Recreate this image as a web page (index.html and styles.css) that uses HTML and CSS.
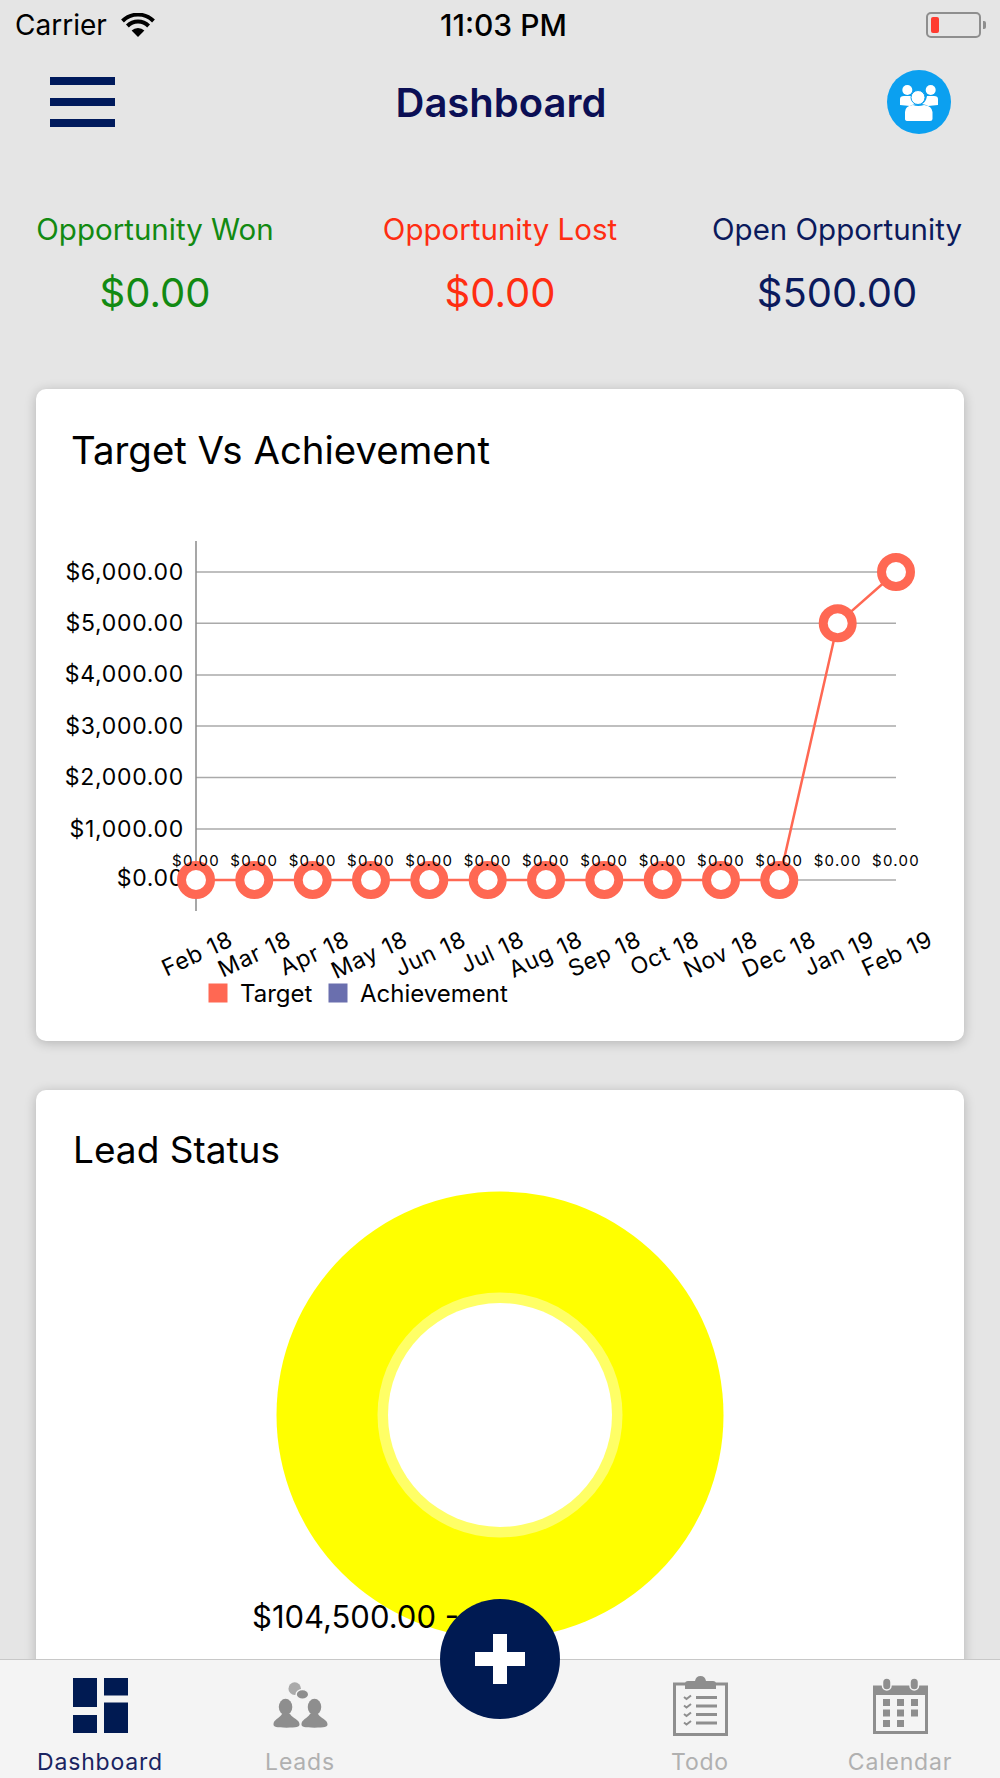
FILE: index.html
```html
<!DOCTYPE html>
<html lang="en">

<head>
    <meta charset="UTF-8">
    <meta name="viewport" content="width=device-width, initial-scale=1.0">
    <title>Dashboard</title>
    <link rel="stylesheet" href="styles.css">
</head>

<body>
    <div class="page">
        <div class="status-bar">
            <div class="status-left">
                <span class="carrier">Carrier</span>
                <svg class="wifi" viewBox="0 0 34 24">
                    <path d="M17 24 L10.6 17.6 A9 9 0 0 1 23.4 17.6 Z" fill="#000" />
                    <path d="M6.4 13 A15 15 0 0 1 27.6 13" fill="none" stroke="#000" stroke-width="4" />
                    <path d="M1.5 8 A22 22 0 0 1 32.5 8" fill="none" stroke="#000" stroke-width="4" />
                </svg>
            </div>
            <span class="clock">11:03 PM</span>
            <div class="battery">
                <div class="battery-body">
                    <div class="battery-level"></div>
                </div>
                <div class="battery-nub"></div>
            </div>
        </div>

        <header class="header">
            <button class="menu-toggle">
                <span></span>
                <span></span>
                <span></span>
            </button>
            <h1 class="header-title">Dashboard</h1>
            <svg class="team-icon" viewBox="-32 -32 64 64">
                <circle r="32" fill="#0ba0f0" />
                <g fill="#fff">
                    <circle cx="-11.7" cy="-12" r="5" />
                    <circle cx="11.7" cy="-12" r="5" />
                    <path d="M-19 3 L-19 -3 Q-19 -6 -15 -6 L-8 -6 Q-7 0 -3 2 Q-8 3 -9 4 Z" />
                    <path d="M19 3 L19 -3 Q19 -6 15 -6 L8 -6 Q7 0 3 2 Q8 3 9 4 Z" />
                    <circle cx="-1" cy="-4.500" r="7" stroke="#0ba0f0" stroke-width="1" />
                    <path d="M-14 17 L-14 10 Q-14 4 -6 3 Q-1 5 5 3 Q13 4 13.500 10 L13.500 17 Q13.500 19 11 19 L-11 19 Q-14 19 -14 17 Z" />
                </g>
            </svg>
        </header>

        <section class="summary">
            <div class="summary-item won">
                <div class="summary-label">Opportunity Won</div>
                <div class="summary-value">$0.00</div>
            </div>
            <div class="summary-item lost">
                <div class="summary-label">Opportunity Lost</div>
                <div class="summary-value">$0.00</div>
            </div>
            <div class="summary-item open">
                <div class="summary-label">Open Opportunity</div>
                <div class="summary-value">$500.00</div>
            </div>
        </section>

        <section class="card card-target">
            <h2 class="card-title">Target Vs Achievement</h2>
            <svg class="line-chart" viewBox="36 500 928 530">
                <!-- grid -->
                <g class="grid">
                    <line x1="196" y1="572" x2="896" y2="572" />
                    <line x1="196" y1="623.300" x2="896" y2="623.300" />
                    <line x1="196" y1="675" x2="896" y2="675" />
                    <line x1="196" y1="726" x2="896" y2="726" />
                    <line x1="196" y1="777.500" x2="896" y2="777.500" />
                    <line x1="196" y1="829" x2="896" y2="829" />
                    <line x1="196" y1="880" x2="896" y2="880" />
                </g>
                <line class="axis" x1="196" y1="541" x2="196" y2="911" />

                <g class="y-labels">
                    <text x="184" y="580">$6,000.00</text>
                    <text x="184" y="631">$5,000.00</text>
                    <text x="184" y="682">$4,000.00</text>
                    <text x="184" y="734">$3,000.00</text>
                    <text x="184" y="785">$2,000.00</text>
                    <text x="184" y="837">$1,000.00</text>
                    <text x="184" y="886">$0.00</text>
                </g>

                <!-- serie -->
                <polyline class="serie" points="196,880 779.300,880 837.700,623.300 896,572" />
                <g class="points">
                    <circle cx="196" cy="880" r="14.500" />
                    <circle cx="254.300" cy="880" r="14.500" />
                    <circle cx="312.700" cy="880" r="14.500" />
                    <circle cx="371" cy="880" r="14.500" />
                    <circle cx="429.300" cy="880" r="14.500" />
                    <circle cx="487.700" cy="880" r="14.500" />
                    <circle cx="546" cy="880" r="14.500" />
                    <circle cx="604.300" cy="880" r="14.500" />
                    <circle cx="662.700" cy="880" r="14.500" />
                    <circle cx="721" cy="880" r="14.500" />
                    <circle cx="779.300" cy="880" r="14.500" />
                    <circle cx="837.700" cy="623.300" r="14.500" />
                    <circle cx="896" cy="572" r="14.500" />
                </g>

                <g class="point-labels">
                    <text x="196" y="865.500">$0.00</text>
                    <text x="254.300" y="865.500">$0.00</text>
                    <text x="312.700" y="865.500">$0.00</text>
                    <text x="371" y="865.500">$0.00</text>
                    <text x="429.300" y="865.500">$0.00</text>
                    <text x="487.700" y="865.500">$0.00</text>
                    <text x="546" y="865.500">$0.00</text>
                    <text x="604.300" y="865.500">$0.00</text>
                    <text x="662.700" y="865.500">$0.00</text>
                    <text x="721" y="865.500">$0.00</text>
                    <text x="779.300" y="865.500">$0.00</text>
                    <text x="837.700" y="865.500">$0.00</text>
                    <text x="896" y="865.500">$0.00</text>
                </g>

                <g class="x-labels">
                    <text transform="translate(234.500 945) rotate(-25)">Feb 18</text>
                    <text transform="translate(292.800 945) rotate(-25)">Mar 18</text>
                    <text transform="translate(351.200 945) rotate(-25)">Apr 18</text>
                    <text transform="translate(409.500 945) rotate(-25)">May 18</text>
                    <text transform="translate(467.800 945) rotate(-25)">Jun 18</text>
                    <text transform="translate(526.200 945) rotate(-25)">Jul 18</text>
                    <text transform="translate(584.500 945) rotate(-25)">Aug 18</text>
                    <text transform="translate(642.800 945) rotate(-25)">Sep 18</text>
                    <text transform="translate(701.200 945) rotate(-25)">Oct 18</text>
                    <text transform="translate(759.500 945) rotate(-25)">Nov 18</text>
                    <text transform="translate(817.800 945) rotate(-25)">Dec 18</text>
                    <text transform="translate(876.200 945) rotate(-25)">Jan 19</text>
                    <text transform="translate(934.500 945) rotate(-25)">Feb 19</text>
                </g>

                <!-- legend -->
                <rect x="208.500" y="983.500" width="19" height="19" fill="#ff6853" />
                <text class="legend-text" x="240" y="1002">Target</text>
                <rect x="328.500" y="983.500" width="19" height="19" fill="#6a6fae" />
                <text class="legend-text" x="360" y="1002">Achievement</text>
            </svg>
        </section>

        <section class="card card-status">
            <h2 class="card-title">Lead Status</h2>
            <svg class="donut-chart" viewBox="36 1180 928 480">
                <circle cx="500" cy="1415" r="223.500" fill="#ffff00" />
                <circle cx="500" cy="1415" r="122.500" fill="#ffff66" />
                <circle cx="500" cy="1415" r="112" fill="#fff" />
                <text class="donut-label" x="252" y="1628">$104,500.00 -</text>
            </svg>
        </section>

        <button class="fab">
            <svg viewBox="0 0 50 50">
                <path d="M18 0 H32 V18 H50 V32 H32 V50 H18 V32 H0 V18 H18 Z" fill="#fff" />
            </svg>
        </button>

        <nav class="tab-bar">
            <a class="tab active" href="#dashboard">
                <svg class="tab-icon" viewBox="0 0 55 56">
                    <rect x="0" y="0" width="24" height="29" />
                    <rect x="0" y="37" width="24" height="18" />
                    <rect x="31" y="0" width="24" height="17.500" />
                    <rect x="31" y="24.500" width="24" height="30.500" />
                </svg>
                <span>Dashboard</span>
            </a>
            <a class="tab" href="#leads">
                <svg class="tab-icon" viewBox="-0.500 -5 57 56">
                    <ellipse cx="22" cy="5" rx="6.500" ry="6.500" fill="#aaa" />
                    <ellipse cx="30" cy="11" rx="6.500" ry="5" stroke="#f4f4f4" stroke-width="1.500" />
                    <ellipse cx="12.500" cy="24" rx="7" ry="8.500" />
                    <ellipse cx="42.500" cy="24" rx="7" ry="8.500" />
                    <path d="M0 42 C0 37 6 36 9 31 L17 31 C20 36 27 37 27 42 C27 45 24 45.500 13.500 45.500 C3 45.500 0 45 0 42 Z" />
                    <path d="M29 42 C29 37 35 36 38 31 L46 31 C49 36 56 37 56 42 C56 45 53 45.500 42.500 45.500 C32 45.500 29 45 29 42 Z" />
                </svg>
                <span>Leads</span>
            </a>
            <div class="tab tab-spacer"></div>
            <a class="tab" href="#todo">
                <svg class="tab-icon tab-icon-tall" viewBox="0 0 55 60">
                    <rect x="1.500" y="8" width="52" height="50.500" fill="none" stroke="#8e8e8e" stroke-width="3" />
                    <path d="M12 13 V8 Q12 5 15 5 H22 Q23 0 27.500 0 Q32 0 33 5 H40 Q43 5 43 8 V13 Z" />
                    <path class="todo-lines" d="M23 21.500 H44 M23 30 H44 M23 38.500 H44 M23 47 H44" />
                    <path class="todo-checks" d="M11 21 L13.500 23 L18 19.500 M11 29.500 L13.500 31.500 L18 28 M11 38 L13.500 40 L18 36.500 M11 46.500 L13.500 48.500 L18 45" />
                </svg>
                <span>Todo</span>
            </a>
            <a class="tab" href="#calendar">
                <svg class="tab-icon" viewBox="0 0 55 56">
                    <rect x="1.500" y="9" width="52" height="45.500" fill="none" stroke="#8e8e8e" stroke-width="3" />
                    <rect x="0" y="8" width="55" height="9" />
                    <rect x="9.500" y="0" width="8.500" height="12" rx="4.250" stroke="#f4f4f4" stroke-width="1.500" />
                    <rect x="37" y="0" width="8.500" height="12" rx="4.250" stroke="#f4f4f4" stroke-width="1.500" />
                    <rect x="10" y="21" width="7" height="7" />
                    <rect x="24" y="21" width="7" height="7" />
                    <rect x="38" y="21" width="7" height="7" />
                    <rect x="10" y="31.500" width="7" height="7" />
                    <rect x="24" y="31.500" width="7" height="7" />
                    <rect x="38" y="31.500" width="7" height="7" />
                    <rect x="10" y="42" width="7" height="7" />
                    <rect x="24" y="42" width="7" height="7" />
                </svg>
                <span>Calendar</span>
            </a>
        </nav>
    </div>
</body>

</html>
```

FILE: styles.css
```css
body {
    font-family: Inter, 'Liberation Sans', sans-serif;
    margin: 0;
    padding: 0;
    background: #e5e5e5;
    color: #000;
}

.page {
    position: relative;
    width: 1000px;
    height: 1778px;
    overflow: hidden;
}

/* Status bar */
.status-bar {
    height: 50px;
    padding: 0 14px 0 15px;
    display: grid;
    grid-template-columns: 425px 1fr auto;
    align-items: center;
    box-sizing: border-box;
}

.status-left {
    display: flex;
    align-items: center;
    gap: 14px;
}

.carrier {
    font-size: 28px;
}

.wifi {
    width: 34px;
    height: 24px;
    flex-shrink: 0;
}

.clock {
    font-size: 30px;
    font-weight: 500;
}

.battery {
    display: flex;
    align-items: center;
    gap: 2px;
}

.battery-body {
    width: 55px;
    height: 26px;
    border: 2px solid #8e8e8e;
    border-radius: 5px;
    padding: 3px;
    box-sizing: border-box;
}

.battery-level {
    width: 8px;
    height: 100%;
    background: #ff3b30;
    border-radius: 2px;
}

.battery-nub {
    width: 3px;
    height: 8px;
    background: #8e8e8e;
    border-radius: 0 2px 2px 0;
}

/* Header */
.header {
    height: 104px;
    padding: 0 49px 0 50px;
    display: flex;
    justify-content: space-between;
    align-items: center;
}

.menu-toggle {
    width: 65px;
    padding: 0;
    background: none;
    border: none;
    display: flex;
    flex-direction: column;
    gap: 13px;
    filter: blur(0.7px);
}

.menu-toggle span {
    height: 8px;
    background: #001a5c;
}

.header-title {
    margin: 0;
    font-size: 40px;
    font-weight: 600;
    color: #0b0f55;
}

.team-icon {
    width: 64px;
    height: 64px;
}

/* Summary */
.summary {
    display: grid;
    grid-template-columns: 310px 380px 294px;
    padding-top: 55px;
    text-align: center;
}

.summary-label {
    font-size: 29.500px;
    line-height: 40px;
}

.summary-value {
    font-size: 40px;
    line-height: 50px;
    margin-top: 19px;
}

.won {
    color: #128a12;
}

.lost {
    color: #ff2d12;
}

.open {
    color: #0b1a5c;
}

/* Cards */
.card {
    margin: 0 36px;
    background: white;
    border-radius: 10px;
    box-shadow: 0 2px 12px rgba(0, 0, 0, 0.22);
}

.card-title {
    margin: 0;
    padding-left: 37px;
    font-size: 37px;
    font-weight: 400;
    line-height: 44px;
}

.card-target {
    margin-top: 71px;
    height: 652px;
    padding-top: 39px;
    box-sizing: border-box;
}

.card-target .card-title {
    padding-left: 35px;
    font-size: 38.400px;
}

.card-status {
    margin-top: 49px;
    height: 760px;
    padding-top: 38px;
    box-sizing: border-box;
}

.line-chart {
    display: block;
    width: 928px;
    height: 530px;
    margin-top: 28px;
}

.donut-chart {
    display: block;
    width: 928px;
    height: 480px;
    margin-top: 8px;
}

.grid line {
    stroke: #aaa;
    stroke-width: 1.5;
}

.axis {
    stroke: #8a8a8a;
    stroke-width: 1.5;
}

.y-labels text {
    font-size: 23px;
    letter-spacing: 0.7px;
    text-anchor: end;
}

.serie {
    fill: none;
    stroke: #ff6853;
    stroke-width: 2.5;
}

.points circle {
    fill: #fff;
    stroke: #ff6853;
    stroke-width: 9;
}

.point-labels text {
    font-size: 15px;
    letter-spacing: 1.300px;
    text-anchor: middle;
}

.x-labels text {
    font-size: 23px;
    letter-spacing: 0.8px;
    text-anchor: end;
}

.legend-text {
    font-size: 24px;
}

.donut-label {
    font-size: 31px;
}

/* Add button */
.fab {
    position: absolute;
    left: 440px;
    top: 1599px;
    width: 120px;
    height: 120px;
    padding: 0;
    border: none;
    border-radius: 50%;
    background: #001a52;
    display: flex;
    align-items: center;
    justify-content: center;
    z-index: 10;
}

.fab svg {
    width: 50px;
    height: 50px;
}

/* Tab bar */
.tab-bar {
    position: absolute;
    left: 0;
    bottom: 0;
    width: 100%;
    height: 119px;
    background: #f4f4f4;
    border-top: 1px solid #c8c8c8;
    box-sizing: border-box;
    display: grid;
    grid-template-columns: repeat(5, 1fr);
}

.tab {
    display: flex;
    flex-direction: column;
    align-items: center;
    justify-content: flex-end;
    padding-bottom: 1px;
    color: #b0b0b0;
    text-decoration: none;
    font-size: 23px;
    letter-spacing: 0.8px;
    line-height: 30px;
    fill: #8e8e8e;
}

.tab-icon {
    width: 55px;
    height: 56px;
    margin-bottom: 13px;
}

.tab-icon-tall {
    height: 60px;
    margin-bottom: 11px;
}

.tab.active {
    color: #1a2461;
    fill: #001a52;
}

.todo-lines,
.todo-checks {
    fill: none;
    stroke: #8e8e8e;
}

.todo-lines {
    stroke-width: 3;
}

.todo-checks {
    stroke-width: 2;
}
```
